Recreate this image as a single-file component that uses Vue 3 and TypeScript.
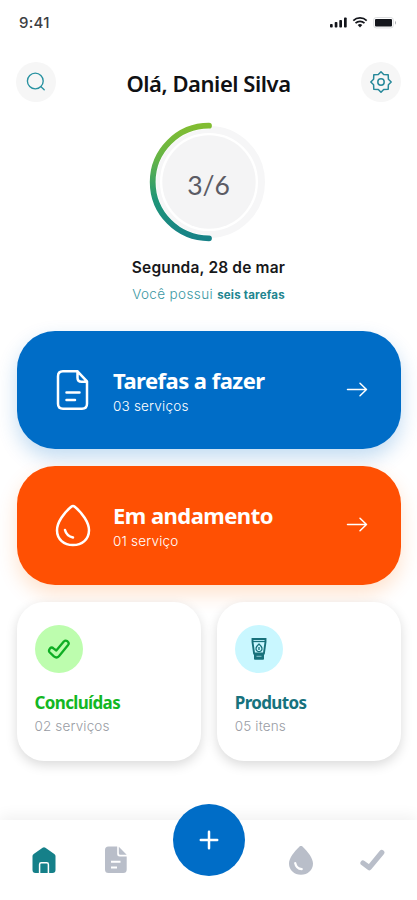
<script setup lang="ts">
interface ServiceCard {
  kind: 'todo' | 'doing'
  title: string
  detail: string
}

interface SummaryCard {
  kind: 'done' | 'products'
  title: string
  detail: string
}

const services: ServiceCard[] = [
  { kind: 'todo', title: 'Tarefas a fazer', detail: '03 serviços' },
  { kind: 'doing', title: 'Em andamento', detail: '01 serviço' },
]

const summaries: SummaryCard[] = [
  { kind: 'done', title: 'Concluídas', detail: '02 serviços' },
  { kind: 'products', title: 'Produtos', detail: '05 itens' },
]
</script>

<template>
  <main class="screen">
    <div class="status">
      <span class="time">9:41</span>
      <svg class="indicators" width="70" height="14" viewBox="0 0 70 14">
        <g fill="#14161c">
          <rect x="1" y="9" width="2.700" height="3.500" rx=".8" />
          <rect x="5.700" y="7" width="2.700" height="5.500" rx=".8" />
          <rect x="10.300" y="5" width="2.700" height="7.500" rx=".8" />
          <rect x="15" y="2.500" width="2.700" height="10" rx=".8" />
          <path d="M31 12.500l-2.300-2.500a3.300 3.300 0 0 1 4.600 0z" />
          <rect x="46" y="4" width="17" height="7.500" rx="1" />
        </g>
        <path d="M24.300 5.600a9.600 9.600 0 0 1 13.400 0M26.500 8.200a6.500 6.500 0 0 1 9 0" fill="none" stroke="#14161c" stroke-width="1.700" />
        <rect x="44.700" y="2.500" width="19.600" height="10.400" rx="2.500" fill="none" stroke="#d4d5d8" stroke-width=".8" />
        <path d="M66 5.700v4q2-2 0-4" fill="#aaacb0" />
      </svg>
    </div>

    <header class="header">
      <button class="round" aria-label="Buscar">
        <svg width="20" height="20" viewBox="0 0 20 20" fill="none" stroke="#2791a0" stroke-width="1.350" stroke-linecap="round">
          <circle cx="9.300" cy="9" r="7.900" />
          <path d="M15 14.700l3.200 3" />
        </svg>
      </button>
      <h1>Olá, Daniel Silva</h1>
      <button class="round" aria-label="Ajustes">
        <svg width="24" height="24" viewBox="0 0 24 24" fill="none" stroke="#27899a" stroke-width="1.500" stroke-linejoin="round">
          <path d="M12 1.800l2.700 2.800 4.500.2.200 4.500L22.200 12l-2.800 2.700-.2 4.500-4.500.2-2.700 2.800-2.700-2.800-4.500-.2-.2-4.500L1.800 12l2.800-2.700.2-4.500 4.500-.2z" />
          <circle cx="12" cy="12" r="3.200" />
        </svg>
      </button>
    </header>

    <section class="progress">
      <div class="ring">
        <svg width="120" height="120" viewBox="0 0 120 120" fill="none">
          <defs>
            <linearGradient id="arc" x1="0" y1="3" x2="0" y2="117" gradientUnits="userSpaceOnUse">
              <stop offset="0" stop-color="#82bd31" />
              <stop offset=".3" stop-color="#64b447" />
              <stop offset=".65" stop-color="#1f9577" />
              <stop offset="1" stop-color="#168187" />
            </linearGradient>
          </defs>
          <circle cx="60" cy="60" r="52.500" stroke="#f6f6f7" stroke-width="7" />
          <circle cx="60" cy="60" r="46.700" fill="#f4f4f5" />
          <path d="M60 3.700a56.300 56.300 0 0 0 0 112.600" stroke="#fff" stroke-width="7" />
          <path d="M60 3.700a56.300 56.300 0 0 0 0 112.600" stroke="url(#arc)" stroke-width="5.800" stroke-linecap="round" />
        </svg>
        <span class="count">3/6</span>
      </div>
      <p class="date">Segunda, 28 de mar</p>
      <p class="note">Você possui <b>seis tarefas</b></p>
    </section>

    <section class="services">
      <article v-for="card in services" :key="card.kind" class="service" :class="card.kind">
        <svg v-if="card.kind === 'todo'" class="glyph" width="40" height="44" viewBox="0 0 40 44" fill="none" stroke="#fff" stroke-width="2.500" stroke-linecap="round" stroke-linejoin="round">
          <path d="M24.500 3.300H10Q5 3.300 5 8.300v27.500q0 5 5 5h19q5 0 5-5V13.300L24.500 3.300v6.500q0 4 4 4H34" />
          <path d="M13.500 24.500h13M13.500 32h8.500" />
        </svg>
        <svg v-else class="glyph" width="40" height="44" viewBox="0 0 40 44" fill="none" stroke="#fff" stroke-width="2.500" stroke-linecap="round" stroke-linejoin="round">
          <path d="M18.200 3.700q1.800-1.500 3.600 0C29 9.800 36 19.300 36 27.300c0 9-7 14.800-16 14.800S4 36.300 4 27.300c0-8 7-17.500 14.200-23.600z" />
          <path d="M12 27q1.500 6 8 7.500" />
        </svg>
        <div class="label">
          <h2>{{ card.title }}</h2>
          <p>{{ card.detail }}</p>
        </div>
        <svg class="arrow" width="22" height="16" viewBox="0 0 22 16" fill="none" stroke="#fff" stroke-width="1.500" stroke-linecap="round" stroke-linejoin="round">
          <path d="M1.500 7.500h19M14 1.300l6.500 6.200-6.500 6.200" />
        </svg>
      </article>
    </section>

    <section class="summaries">
      <article v-for="card in summaries" :key="card.kind" class="summary" :class="card.kind">
        <div class="badge">
          <svg v-if="card.kind === 'done'" width="24" height="22" viewBox="0 0 24 22" fill="none" stroke="#0fae24" stroke-width="2.300" stroke-linejoin="round">
            <path d="M3 10.400q1.700-1.700 3.400 0L9.300 12.500l7.500-9q1.600-1.500 3.700-.2 2.100 1.600.6 3.600l-9.200 11.300q-2.200 2.400-5 .2l-4.300-4.200q-1.400-1.600.4-3.800z" />
          </svg>
          <svg v-else width="18" height="24" viewBox="0 0 18 24" fill="none" stroke="#17717b">
            <path d="M2.500 2h13v3l-1.600 11.500H4.100L2.500 5z" stroke-width="1.900" />
            <path d="M2.500 4.500h13" stroke-width="1.300" />
            <path d="M4.500 16v6.200h9V16" fill="#17717b" stroke-width="1" />
            <path d="M6.500 19.300h5" stroke="#8fc9d1" stroke-width="1" />
            <path d="M9 7q5 4.500 1.800 7-1.800 1.300-3.600 0Q4 11.500 9 7zM9 10v3" stroke-width="1.300" />
          </svg>
        </div>
        <h3>{{ card.title }}</h3>
        <p>{{ card.detail }}</p>
      </article>
    </section>

    <nav class="nav">
      <a class="tab home">
        <svg width="24" height="28" viewBox="0 0 24 28">
          <path d="M.5 10Q.5 8.700 1.700 7.900L10.600 1.700q1.400-1 2.800 0l8.900 6.200q1.200.8 1.200 2.100V24q0 3-3 3h-17q-3 0-3-3z" fill="#158089" />
          <path d="M7.600 27V18.500q0-1.700 1.700-1.700h5.400q1.700 0 1.700 1.700V27" fill="none" stroke="#fff" stroke-width="1.500" />
        </svg>
      </a>
      <a class="tab">
        <svg width="24" height="28" viewBox="0 0 24 28">
          <path d="M13.200.6H4.500Q1 .6 1 4.100v19.500q0 3.500 3.500 3.500h14.700q3.500 0 3.500-3.500V10.500h-7q-2.500 0-2.500-2.500zM14.800.8v6.500q0 1.500 1.500 1.500h6.400z" fill="#b9bec9" />
          <path d="M7 15.700h9.500M7 21.500h6" stroke="#fff" stroke-width="2" />
        </svg>
      </a>
      <button class="fab" aria-label="Adicionar">
        <svg width="22" height="22" viewBox="0 0 22 22" stroke="#fff" stroke-width="2.500" stroke-linecap="round">
          <path d="M11 2.800v16.400M2.800 11h16.400" />
        </svg>
      </button>
      <a class="tab">
        <svg width="26" height="30" viewBox="0 0 26 30">
          <path d="M11.300.7q1.700-1.700 3.400 0C20 6 25 12 25 17.600c0 6.700-5.200 11.200-12 11.200S1 24.300 1 17.600C1 12 6 6 11.300.7z" fill="#b9bec9" />
          <path d="M7.200 17q1 5.600 6.500 6.200" fill="none" stroke="#fff" stroke-width="2.200" stroke-linecap="round" />
        </svg>
      </a>
      <a class="tab check">
        <svg width="26" height="24" viewBox="0 0 26 24">
          <path d="M3 15l6.300 4.700L21.800 4.500" fill="none" stroke="#b9bec9" stroke-width="5.200" stroke-linecap="round" stroke-linejoin="round" />
        </svg>
      </a>
    </nav>
  </main>
</template>

<style>
body {
  margin: 0;
  background: #fff;
}
</style>

<style scoped>
.screen {
  display: flex;
  flex-direction: column;
  width: 417px;
  height: 900px;
  overflow: hidden;
  background: #fff;
  font-family: Inter, "Noto Sans", sans-serif;
}

h1, h2, h3, p {
  margin: 0;
  white-space: nowrap;
}

h1, h2, h3 {
  font-family: "Noto Sans", "Open Sans", sans-serif;
}

button {
  border: 0;
  padding: 0;
}

.status {
  display: flex;
  justify-content: space-between;
  align-items: center;
  height: 44px;
  padding: 0 18px 0 19px;
}

.time {
  color: #3c3e42;
  font-size: 15px;
  font-weight: 500;
  letter-spacing: .3px;
}

.header {
  display: flex;
  justify-content: space-between;
  align-items: center;
  height: 40px;
  margin: 18px 16px 0;
}

.round {
  display: grid;
  place-items: center;
  width: 40px;
  height: 40px;
  border-radius: 50%;
  background: #f6f6f6;
}

h1 {
  padding-top: 2px;
  color: #101114;
  font-size: 22px;
  font-weight: 600;
  letter-spacing: -.45px;
}

.progress {
  display: flex;
  flex-direction: column;
  align-items: center;
  box-sizing: border-box;
  height: 208px;
  padding-top: 20px;
}

.ring {
  display: grid;
  width: 120px;
  height: 120px;
}

.ring > * {
  grid-area: 1 / 1;
}

.count {
  place-self: center;
  padding-top: 5px;
  color: #5b5b64;
  font-family: Lato, sans-serif;
  font-size: 26.500px;
}

.date {
  height: 24px;
  margin-top: 14px;
  color: #17181a;
  font-size: 15.500px;
  font-weight: 600;
  letter-spacing: .17px;
  line-height: 24px;
}

.note {
  height: 20px;
  margin-top: 4px;
  color: #3b98a3;
  font-size: 13.500px;
  font-weight: 300;
  letter-spacing: .37px;
  line-height: 20px;
}

.note b {
  color: #22858f;
  font-size: 11.500px;
  font-weight: 700;
  letter-spacing: .2px;
}

.services {
  display: flex;
  flex-direction: column;
  gap: 17px;
  padding: 20.500px 16px 0 16.500px;
}

.service {
  display: flex;
  align-items: center;
  box-sizing: border-box;
  height: 118.500px;
  padding: 0 33px 0 36px;
  border-radius: 38px;
  color: #fff;
}

.todo {
  background: #006dc7;
  box-shadow: 0 9px 20px #006dc73d;
}

.doing {
  background: #ff5003;
  box-shadow: 0 9px 20px #ff700033;
}

.label {
  flex: 1;
  margin-left: 20.500px;
  padding-top: 3px;
}

h2 {
  font-size: 22px;
  font-weight: 700;
  letter-spacing: -.53px;
  line-height: 28px;
}

.label p {
  margin-top: 1px;
  font-size: 13.500px;
  font-weight: 300;
  letter-spacing: .2px;
  line-height: 22px;
}

.summaries {
  display: grid;
  grid-template-columns: 1fr 1fr;
  gap: 16px;
  padding: 17px 16px 0 16.500px;
}

.summary {
  box-sizing: border-box;
  height: 159.500px;
  padding: 23.500px 18px;
  border-radius: 27px;
  background: #fff;
  box-shadow: 0 4px 12px #00000026;
}

.badge {
  display: grid;
  place-items: center;
  width: 48px;
  height: 48px;
  border-radius: 50%;
}

.done .badge {
  background: #bdfdae;
}

.products .badge {
  background: #c9f7ff;
}

h3 {
  margin-top: 17px;
  font-size: 17px;
  font-weight: 700;
  letter-spacing: -.65px;
  line-height: 26px;
}

.done h3 {
  color: #13b723;
}

.products h3 {
  color: #17727d;
}

.summary p {
  color: #999ca4;
  font-size: 13.500px;
  font-weight: 300;
  letter-spacing: .15px;
  line-height: 20px;
}

.nav {
  display: grid;
  grid-template-columns: 72px 72px 1fr 72px 72px;
  justify-items: center;
  align-items: start;
  box-sizing: border-box;
  height: 80px;
  margin-top: auto;
  padding: 26px 8px 0;
  background: #fff;
  box-shadow: 0 -4px 14px #0000000f;
}

.tab svg {
  display: block;
}

.check {
  padding-top: 2px;
}

.fab {
  display: grid;
  place-items: center;
  width: 72px;
  height: 72px;
  margin-top: -42px;
  border-radius: 50%;
  background: #006dc7;
}
</style>
